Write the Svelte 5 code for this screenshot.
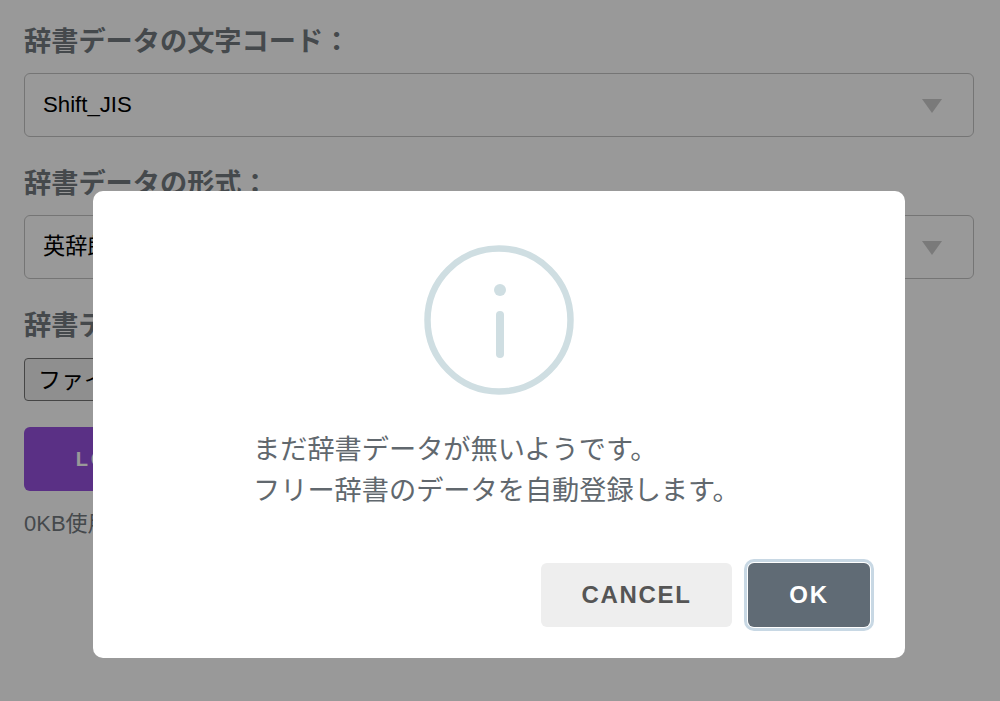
<script>
  let showDialog = $state(true)

  const encodings = ['Shift_JIS', 'UTF-8', 'EUC-JP']
  const formats = ['英辞郎', 'PDIC', 'EPWING']
</script>

<main class="page">
  <label class="field">
    <span class="label">辞書データの文字コード：</span>
    <span class="select-wrap">
      <select>
        {#each encodings as enc}
          <option>{enc}</option>
        {/each}
      </select>
    </span>
  </label>

  <label class="field">
    <span class="label">辞書データの形式：</span>
    <span class="select-wrap">
      <select>
        {#each formats as fmt}
          <option>{fmt}</option>
        {/each}
      </select>
    </span>
  </label>

  <div class="field file">
    <span class="label">辞書データファイル：</span>
    <button class="file-btn" type="button">ファイルを選択</button>
  </div>

  <button class="load" type="button">LOAD</button>
  <p class="usage">0KB使用中</p>
</main>

{#if showDialog}
  <div class="overlay">
    <div class="dialog" role="dialog">
      <svg class="icon" width="150" height="150" viewBox="0 0 150 150" fill="none" stroke="#cfdee2">
        <circle cx="75" cy="75" r="71.5" stroke-width="6.5" />
        <circle cx="76" cy="45" r="6" fill="#cfdee2" stroke="none" />
        <line x1="76" y1="70" x2="76" y2="109" stroke-width="8" stroke-linecap="round" />
      </svg>
      <p class="message">まだ辞書データが無いようです。<br />フリー辞書のデータを自動登録します。</p>
      <div class="actions">
        <button class="cancel" type="button" onclick={() => (showDialog = false)}>CANCEL</button>
        <button class="ok" type="button" onclick={() => (showDialog = false)}>OK</button>
      </div>
    </div>
  </div>
{/if}

<style>
  :global(body) {
    margin: 0;
    background: #fff;
    font-family: 'Liberation Sans', 'Noto Sans CJK JP', sans-serif;
  }

  .page {
    height: 701px;
    box-sizing: border-box;
    padding: 24px 26px 0 24px;
    overflow: hidden;
  }

  .field {
    display: block;
    margin-bottom: 29px;
  }

  .label {
    display: block;
    height: 36px;
    margin-bottom: 13px;
    font-size: 27.2px;
    line-height: 36px;
    font-weight: 700;
    color: #737a7f;
  }

  .select-wrap {
    display: block;
    position: relative;
  }

  .select-wrap::after {
    content: '';
    position: absolute;
    top: 26px;
    right: 32px;
    border-style: solid;
    border-width: 14px 10.5px 0;
    border-color: #ccc transparent transparent;
    pointer-events: none;
  }

  select {
    display: block;
    width: 100%;
    height: 64px;
    box-sizing: border-box;
    padding: 0 18px 1px;
    appearance: none;
    font: inherit;
    font-size: 22.2px;
    color: #000;
    background: #fff;
    border: 1px solid #c4c4c4;
    border-radius: 6px;
  }

  .file {
    margin-bottom: 26px;
  }

  .file .label {
    margin-bottom: 14px;
  }

  .file-btn {
    display: block;
    width: 220px;
    height: 43px;
    padding: 0 0 3px 13px;
    text-align: left;
    font: inherit;
    font-size: 23px;
    color: #000;
    background: #efefef;
    border: 1px solid #767676;
    border-radius: 4px;
  }

  .load {
    display: block;
    width: 172px;
    height: 64px;
    padding: 0;
    font: inherit;
    font-size: 20px;
    font-weight: 700;
    letter-spacing: 0.15em;
    color: #fff;
    background: #9650de;
    border: 0;
    border-radius: 6px;
  }

  .usage {
    margin: 19px 0 0;
    font-size: 22px;
    line-height: 28px;
    color: #737a7f;
  }

  .overlay {
    position: fixed;
    inset: 0;
    display: flex;
    justify-content: center;
    align-items: flex-start;
    padding: 191px 2px 0 0;
    background: rgba(0, 0, 0, 0.4);
  }

  .dialog {
    display: flex;
    flex-direction: column;
    align-items: center;
    width: 812px;
    height: 467px;
    box-sizing: border-box;
    padding: 54px 35px 0;
    background: #fff;
    border-radius: 10px;
  }

  .icon {
    display: block;
  }

  .message {
    align-self: flex-start;
    margin: 34px 0 0 125px;
    font-size: 27.2px;
    line-height: 41px;
    color: #61686e;
  }

  .actions {
    display: flex;
    justify-content: flex-end;
    gap: 16px;
    align-self: stretch;
    margin-top: 52px;
  }

  .actions button {
    height: 64px;
    padding: 0;
    font: inherit;
    font-size: 24px;
    font-weight: 700;
    letter-spacing: 0.07em;
    border: 0;
    border-radius: 6px;
  }

  .cancel {
    width: 191px;
    color: #555;
    background: #eee;
  }

  .ok {
    width: 122px;
    color: #fff;
    background: #606b75;
    box-shadow: 0 0 0 1px #fff, 0 0 0 4px #c8d8e4;
  }
</style>
